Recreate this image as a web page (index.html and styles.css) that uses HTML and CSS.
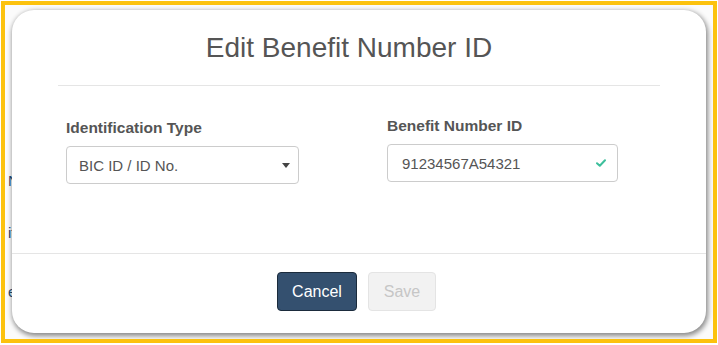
FILE: index.html
```html
<!DOCTYPE html>
<html lang="en">
<head>
    <meta charset="UTF-8">
    <meta name="viewport" content="width=device-width, initial-scale=1.0">
    <title>Edit Benefit Number ID</title>
    <link rel="stylesheet" href="styles.css">
</head>
<body>

    <div class="frame">
        <div class="backdrop">
            <p class="ghost ghost-n">N</p>
            <p class="ghost ghost-it">it</p>
            <p class="ghost ghost-e">e</p>
        </div>

        <div class="modal">
            <div class="modal-header">
                <h1 class="modal-title">Edit Benefit Number ID</h1>
            </div>

            <div class="modal-body">
                <div class="field">
                    <label class="field-label">Identification Type</label>
                    <div class="select-box">
                        <span>BIC ID / ID No.</span>
                        <span class="caret"></span>
                    </div>
                </div>
                <div class="field field-right">
                    <label class="field-label">Benefit Number ID</label>
                    <div class="input-box">
                        <span>91234567A54321</span>
                        <svg class="check" width="10" height="8" viewBox="0 0 10 8">
                            <path d="M1 4.2 L3.8 6.8 L9 1.2" fill="none" stroke="#3dbf9c" stroke-width="2" stroke-linecap="round" stroke-linejoin="round"/>
                        </svg>
                    </div>
                </div>
            </div>

            <div class="modal-footer">
                <button class="btn btn-cancel">Cancel</button>
                <button class="btn btn-save" disabled>Save</button>
            </div>
        </div>
    </div>

</body>
</html>
```

FILE: styles.css
```css
body {
    margin: 0;
    padding: 0;
    background: #fff;
    font-family: "Liberation Sans", Arial, sans-serif;
    color: #555;
}
.frame {
    position: relative;
    width: 716px;
    height: 342px;
    margin: 1px;
    box-sizing: border-box;
    border: 4px solid #fcc20e;
    background-color: #fbfbfb;
    overflow: hidden;
}
.backdrop {
    display: flex;
    flex-direction: column;
    padding: 166px 0 0 3px;
}
.ghost {
    margin: 0;
    font-size: 15px;
    line-height: 20px;
    color: #2c4c6e;
}
.ghost-it {
    margin-top: 32px;
}
.ghost-e {
    margin-top: 39px;
}
.modal {
    position: absolute;
    left: 7px;
    top: 5px;
    width: 694px;
    height: 323px;
    background-color: #fff;
    border-radius: 22px;
    box-shadow: 1px 2px 5px 1px rgba(0, 0, 0, 0.45);
    display: flex;
    flex-direction: column;
}
.modal-header {
    margin: 0 46px;
    padding: 22px 20px 21px 0;
    border-bottom: 1px solid #e5e5e5;
}
.modal-title {
    margin: 0;
    font-size: 28px;
    line-height: 32px;
    font-weight: normal;
    text-align: center;
    color: #555;
}
.modal-body {
    display: grid;
    grid-template-columns: 233px 231px;
    column-gap: 88px;
    padding: 32px 0 69px 54px;
    border-bottom: 1px solid #e5e5e5;
}
.field {
    display: flex;
    flex-direction: column;
}
.field-right {
    margin-top: -2px;
}
.field-label {
    font-size: 15.5px;
    line-height: 20px;
    font-weight: bold;
    color: #555;
    margin-bottom: 8px;
}
.select-box, .input-box {
    display: flex;
    align-items: center;
    justify-content: space-between;
    height: 38px;
    box-sizing: border-box;
    border: 1px solid #ccc;
    border-radius: 4px;
    font-size: 15px;
    color: #555;
}
.select-box {
    padding: 0 8px 0 12px;
}
.input-box {
    padding: 0 11px 0 14px;
}
.caret {
    width: 0;
    height: 0;
    border-left: 4px solid transparent;
    border-right: 4px solid transparent;
    border-top: 5px solid #444;
}
.modal-footer {
    display: flex;
    justify-content: center;
    gap: 11px;
    padding: 18px 5px 0 0;
}
.btn {
    height: 39px;
    box-sizing: border-box;
    border-radius: 4px;
    font-family: "Liberation Sans", Arial, sans-serif;
    font-size: 16px;
    padding: 0;
}
.btn-cancel {
    width: 80px;
    background-color: #34506f;
    border: 1px solid #1b2b3c;
    color: #fff;
}
.btn-save {
    width: 68px;
    background-color: #f2f2f2;
    border: 1px solid #e4e4e4;
    color: #c6c6c6;
}
```
